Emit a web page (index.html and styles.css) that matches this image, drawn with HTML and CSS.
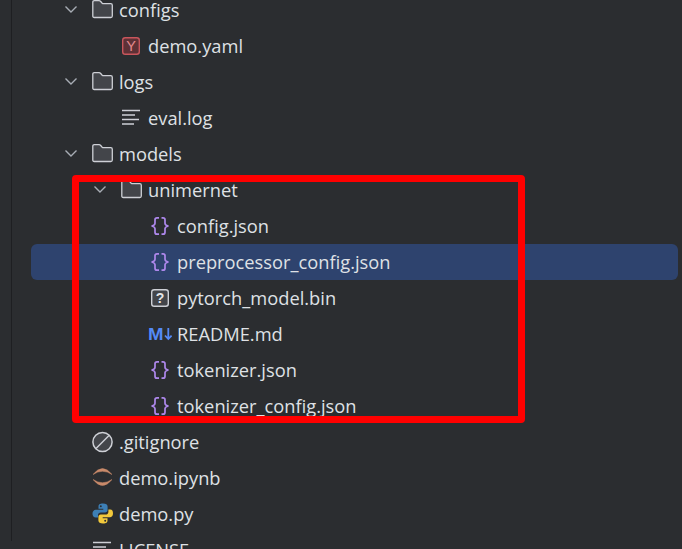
FILE: index.html
```html
<!DOCTYPE html>
<html>
<head>
    <title>Project</title>
    <link rel="stylesheet" href="styles.css">
</head>
<body>
    <svg class="defs" width="0" height="0">
        <symbol id="chev" viewBox="0 0 18 18">
            <path d="M3.5 5.5 L9 11 L14.5 5.5" fill="none" stroke="#a8adb5" stroke-width="1.4"/>
        </symbol>
        <symbol id="folder" viewBox="0 0 22 22">
            <path d="M1.8 3.2 Q1.8 1.7 3.3 1.7 H8 Q9 1.7 9.7 2.5 L11.2 4.2 Q11.7 4.7 12.5 4.7 H19.8 Q21.3 4.7 21.3 6.2 V17 Q21.3 18.5 19.8 18.5 H3.3 Q1.8 18.5 1.8 17 Z" fill="#43454a" stroke="#ced0d6" stroke-width="1.3"/>
        </symbol>
        <symbol id="json" viewBox="0 0 22 22">
            <path d="M10 2.8 H8 Q6 2.8 6 4.8 V8.2 Q6 10.2 2.6 11 Q6 11.8 6 13.8 V17.2 Q6 19.2 8 19.2 H10 M12.5 2.8 H14 Q16 2.8 16 4.8 V8.2 Q16 10.2 19.4 11 Q16 11.8 16 13.8 V17.2 Q16 19.2 14 19.2 H12.5" fill="none" stroke="#ae88ec" stroke-width="1.7"/>
        </symbol>
        <symbol id="lines" viewBox="0 0 22 22">
            <path d="M2 3.5 H20 M2 8 H15 M2 12.5 H19 M2 17 H14" fill="none" stroke="#ced0d6" stroke-width="1.3"/>
        </symbol>
    </svg>

    <div class="panel">
        <div class="tree">
            <div class="row level-1"><svg class="chev"><use href="#chev"/></svg><svg class="icon"><use href="#folder"/></svg><span>configs</span></div>
            <div class="row level-2">
                <svg class="icon" viewBox="0 0 22 22">
                    <rect x="2.7" y="2.7" width="16.6" height="16.6" rx="2.5" fill="#5e3136" stroke="#c9565c" stroke-width="1.4"/>
                    <text x="11" y="16.3" class="glyph" fill="#e58a8e" font-size="14.5">Y</text>
                </svg>
                <span>demo.yaml</span>
            </div>
            <div class="row level-1"><svg class="chev"><use href="#chev"/></svg><svg class="icon"><use href="#folder"/></svg><span>logs</span></div>
            <div class="row level-2"><svg class="icon"><use href="#lines"/></svg><span>eval.log</span></div>
            <div class="row level-1"><svg class="chev"><use href="#chev"/></svg><svg class="icon"><use href="#folder"/></svg><span>models</span></div>
            <div class="row level-2 folder"><svg class="chev"><use href="#chev"/></svg><svg class="icon"><use href="#folder"/></svg><span>unimernet</span></div>
            <div class="row level-3"><svg class="icon"><use href="#json"/></svg><span>config.json</span></div>
            <div class="row level-3 selected"><svg class="icon"><use href="#json"/></svg><span>preprocessor_config.json</span></div>
            <div class="row level-3">
                <svg class="icon" viewBox="0 0 22 22">
                    <rect x="2.7" y="2.7" width="16.6" height="16.6" rx="2.5" fill="#43454a" stroke="#ced0d6" stroke-width="1.4"/>
                    <text x="11" y="16.3" class="glyph strong" fill="#e4e5e8" font-size="14">?</text>
                </svg>
                <span>pytorch_model.bin</span>
            </div>
            <div class="row level-3">
                <svg class="icon md-icon" viewBox="0 0 24 22">
                    <text x="0" y="16.5" class="md" fill="#548af7" font-size="16" textLength="15.5" lengthAdjust="spacingAndGlyphs">M</text>
                    <path d="M20.3 5 V16 M17 12.5 L20.3 16 L23.6 12.5" fill="none" stroke="#548af7" stroke-width="1.8"/>
                </svg>
                <span>README.md</span>
            </div>
            <div class="row level-3"><svg class="icon"><use href="#json"/></svg><span>tokenizer.json</span></div>
            <div class="row level-3"><svg class="icon"><use href="#json"/></svg><span>tokenizer_config.json</span></div>
            <div class="row root-file">
                <svg class="icon" viewBox="0 0 22 22">
                    <circle cx="11.5" cy="11" r="9.6" fill="#43454a" stroke="#ced0d6" stroke-width="1.5"/>
                    <path d="M5 17.5 L18 4.5" stroke="#ced0d6" stroke-width="1.5"/>
                </svg>
                <span>.gitignore</span>
            </div>
            <div class="row root-file">
                <svg class="icon" viewBox="0 0 22 22">
                    <path d="M2 7.5 Q11.5 -4.5 21 7.5 Q11.5 1 2 7.5 Z M2 12.5 Q11.5 24.5 21 12.5 Q11.5 19 2 12.5 Z" fill="#c98a6a" stroke="#c98a6a" stroke-width="0.5"/>
                </svg>
                <span>demo.ipynb</span>
            </div>
            <div class="row root-file">
                <svg class="icon" viewBox="0 0 22 22">
                    <path d="M12 .5 C8.5 .5 7.5 1.8 7.5 3.5 V5.8 H12.3 V6.8 H4.8 C2.8 6.8 1.5 8.5 1.5 10.7 C1.5 13.1 2.8 14.5 4.8 14.5 H7 V12.1 C7 10.5 8.3 9.4 9.8 9.4 H14.3 C15.6 9.4 16.6 8.4 16.6 7.1 V3.5 C16.6 1.7 15 .5 12 .5 Z" fill="#3d7fb5"/>
                    <circle cx="9.8" cy="3.2" r="1" fill="#2b2d30"/>
                    <path d="M12 20.5 C15.5 20.5 16.5 19.2 16.5 17.5 V15.2 H11.7 V14.2 H19.2 C21.2 14.2 22 12.5 22 10.3 C22 7.9 21.2 6.5 19.2 6.5 H17.4 V8.9 C17.4 10.5 16 11.6 14.5 11.6 H9.7 C8.4 11.6 7.4 12.6 7.4 13.9 V17.5 C7.4 19.3 9 20.5 12 20.5 Z" fill="#f2c93c"/>
                    <circle cx="14.2" cy="17.8" r="1" fill="#2b2d30"/>
                </svg>
                <span>demo.py</span>
            </div>
            <div class="row root-file"><svg class="icon"><use href="#lines"/></svg><span>LICENSE</span></div>
        </div>
    </div>

    <div class="highlight"></div>
</body>
</html>
```

FILE: styles.css
```css
* {
    margin: 0;
    padding: 0;
    box-sizing: border-box;
}

html, body {
    height: 100%;
    overflow: hidden;
}

body {
    position: relative;
    background: #2b2d30;
    color: #dfe1e5;
    font-family: "Open Sans", "Noto Sans", sans-serif;
    font-size: 18.3px;
}

.defs {
    position: absolute;
}

.panel {
    height: 100%;
    margin-left: 11px;
    padding-left: 19px;
    padding-right: 4px;
    border-left: 1px solid #1e1f22;
}

.tree {
    margin-top: -8px;
}

.row {
    display: flex;
    align-items: center;
    height: 36px;
    padding-bottom: 1px;
    border-radius: 6px;
    white-space: nowrap;
}

.level-1 {
    padding-left: 31px;
}

.root-file,
.level-2.folder {
    padding-left: 60px;
}

.level-2 {
    padding-left: 89px;
}

.level-3 {
    padding-left: 118px;
}

.selected {
    background: #2e436e;
}

.chev {
    flex: none;
    width: 18px;
    height: 18px;
    margin-right: 11px;
}

.icon {
    flex: none;
    width: 22px;
    height: 22px;
    margin-right: 6px;
}

.md-icon {
    width: 24px;
    margin-left: -1px;
    margin-right: 5px;
}

.glyph {
    font-family: "Liberation Sans", sans-serif;
    text-anchor: middle;
}

.strong,
.md {
    font-family: "Liberation Sans", sans-serif;
    font-weight: 700;
}

.highlight {
    position: absolute;
    left: 72px;
    top: 175px;
    width: 453px;
    height: 248px;
    border: 7px solid #ff0000;
    border-radius: 4px;
}
```
